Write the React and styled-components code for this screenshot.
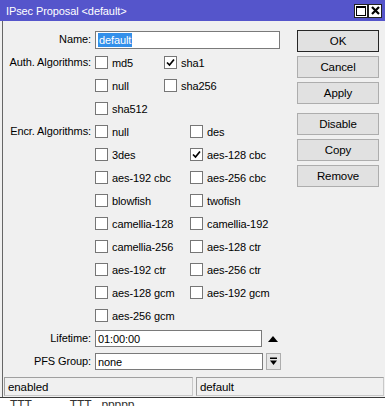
import React from 'react';
import styled, { createGlobalStyle } from 'styled-components';

const Global = createGlobalStyle`
  *, *::before, *::after { box-sizing: border-box; }
  html, body { margin: 0; padding: 0; background: #fff; }
  body {
    font-family: "Liberation Sans", Arial, sans-serif;
    font-size: 11px;
    letter-spacing: -0.1px;
    color: #000;
  }
`;

const Screen = styled.div`
  width: 385px;
  height: 406px;
  overflow: hidden;
  background: #fff;
`;

const Window = styled.div`
  width: 385px;
  background: #f0f0f0;
  border-bottom: 1px solid #3a3a3a;
`;

const TitleBar = styled.div`
  height: 21px;
  background: #5555cb;
  color: #fff;
  display: flex;
  align-items: center;
  padding: 0 3px 0 6px;
  font-size: 11px;
`;

const TitleText = styled.div`
  flex: 1;
`;

const TitleButtons = styled.div`
  display: flex;
`;

const TitleBtn = styled.div`
  width: 14px;
  height: 14px;
  background: #fff;
  border: 1px solid #222;
  display: flex;
  align-items: center;
  justify-content: center;
`;

const Body = styled.div`
  margin-left: 2px;
  border-left: 1px solid #666;
`;

const Main = styled.div`
  display: flex;
  padding-top: 7px;
`;

const Form = styled.div`
  flex: 0 0 294px;
  display: flex;
  flex-direction: column;
`;

const Row = styled.div`
  display: flex;
  align-items: flex-start;
`;

const Label = styled.div`
  flex: 0 0 92px;
  height: 23px;
  line-height: 23px;
  text-align: right;
  padding-right: 4px;
  white-space: nowrap;
`;

const Field = styled.div`
  height: 23px;
  display: flex;
  align-items: center;
`;

const TextInput = styled.div`
  width: ${p => p.$w}px;
  height: ${p => p.$h}px;
  background: #fff;
  border: 1px solid #7a7a7a;
  display: flex;
  align-items: center;
  padding-left: 2px;
  white-space: nowrap;
`;

const Selected = styled.span`
  background: #3390ea;
  color: #fff;
  padding: 0 1px;
  line-height: 14px;
`;

const CheckGrid = styled.div`
  display: grid;
  grid-template-columns: ${p => p.$col}px auto;
  grid-auto-rows: 23px;
`;

const CheckItem = styled.div`
  display: flex;
  align-items: center;
  gap: 4px;
  white-space: nowrap;
`;

const Box = styled.div`
  width: 13px;
  height: 13px;
  background: #fff;
  border: 1px solid #767676;
  display: flex;
  align-items: center;
  justify-content: center;
`;

const ButtonCol = styled.div`
  flex: 0 0 82px;
  display: flex;
  flex-direction: column;
  padding-top: 2px;
`;

const Btn = styled.div`
  height: 22px;
  margin-top: ${p => p.$gap}px;
  background: #e1e1e1;
  border: 1px solid ${p => (p.$default ? '#262626' : '#adadad')};
  display: flex;
  align-items: center;
  justify-content: center;
  font-size: 11.5px;
`;

const Triangle = styled.div`
  width: 0;
  height: 0;
  margin-left: 6px;
  border-left: 5px solid transparent;
  border-right: 5px solid transparent;
  border-bottom: 6px solid #000;
`;

const DropBtn = styled.div`
  width: 15px;
  height: 17px;
  margin-left: 3px;
  background: #e6e6e6;
  border: 1px solid #adadad;
  display: flex;
  align-items: center;
  justify-content: center;
`;

const StatusBar = styled.div`
  display: flex;
  gap: 3px;
  padding: 4px 2px 1px 1px;
`;

const StatusCell = styled.div`
  flex: 0 0 ${p => p.$w}px;
  height: 19px;
  border: 1px solid #c8c8c8;
  border-top-color: #a0a0a0;
  border-left-color: #a0a0a0;
  padding-left: 3px;
  display: flex;
  align-items: center;
  font-size: 11.5px;
`;

const Behind = styled.div`
  display: flex;
  padding-left: 10px;
  height: 8px;
  color: #333;
  font-size: 12px;
  line-height: 14px;
  overflow: hidden;
`;

const BehindText = styled.span`
  margin-right: ${p => p.$mr}px;
`;

function Check({ label, checked }) {
  return (
    <CheckItem>
      <Box>
        {checked && (
          <svg width="9" height="9" viewBox="0 0 9 9">
            <path d="M1 4.5 L3.5 7 L8 1.5" fill="none" stroke="#000" strokeWidth="1.7" />
          </svg>
        )}
      </Box>
      <span>{label}</span>
    </CheckItem>
  );
}

const auth = [
  ['md5', false], ['sha1', true],
  ['null', false], ['sha256', false],
  ['sha512', false],
];

const encr = [
  ['null', false], ['des', false],
  ['3des', false], ['aes-128 cbc', true],
  ['aes-192 cbc', false], ['aes-256 cbc', false],
  ['blowfish', false], ['twofish', false],
  ['camellia-128', false], ['camellia-192', false],
  ['camellia-256', false], ['aes-128 ctr', false],
  ['aes-192 ctr', false], ['aes-256 ctr', false],
  ['aes-128 gcm', false], ['aes-192 gcm', false],
  ['aes-256 gcm', false],
];

const buttons = [
  ['OK', 0, true], ['Cancel', 4], ['Apply', 4],
  ['Disable', 9], ['Copy', 4], ['Remove', 4],
];

export default function App() {
  return (
    <Screen>
      <Global />
      <Window>
        <TitleBar>
          <TitleText>IPsec Proposal &lt;default&gt;</TitleText>
          <TitleButtons>
            <TitleBtn>
              <svg width="10" height="10" viewBox="0 0 10 10">
                <rect x="0.5" y="0.5" width="9" height="9" fill="none" stroke="#000" />
                <rect x="0.5" y="0.5" width="9" height="1.5" fill="#000" />
              </svg>
            </TitleBtn>
            <TitleBtn>
              <svg width="9" height="9" viewBox="0 0 9 9">
                <path d="M1 1 L8 8 M8 1 L1 8" stroke="#000" strokeWidth="2.2" />
              </svg>
            </TitleBtn>
          </TitleButtons>
        </TitleBar>
        <Body>
          <Main>
            <Form>
              <Row>
                <Label>Name:</Label>
                <Field>
                  <TextInput $w={185} $h={18}>
                    <Selected>default</Selected>
                  </TextInput>
                </Field>
              </Row>
              <Row>
                <Label>Auth. Algorithms:</Label>
                <CheckGrid $col={69}>
                  {auth.map(([l, c], i) => <Check key={i} label={l} checked={c} />)}
                </CheckGrid>
              </Row>
              <Row>
                <Label>Encr. Algorithms:</Label>
                <CheckGrid $col={95}>
                  {encr.map(([l, c], i) => <Check key={i} label={l} checked={c} />)}
                </CheckGrid>
              </Row>
              <Row>
                <Label>Lifetime:</Label>
                <Field>
                  <TextInput $w={167} $h={17}>01:00:00</TextInput>
                  <Triangle />
                </Field>
              </Row>
              <Row>
                <Label>PFS Group:</Label>
                <Field>
                  <TextInput $w={168} $h={17}>none</TextInput>
                  <DropBtn>
                    <svg width="9" height="9" viewBox="0 0 9 9">
                      <rect x="1" y="0.5" width="7" height="1.5" fill="#000" />
                      <path d="M1 3.5 L8 3.5 L4.5 8 Z" fill="#000" />
                    </svg>
                  </DropBtn>
                </Field>
              </Row>
            </Form>
            <ButtonCol>
              {buttons.map(([l, g, d]) => (
                <Btn key={l} $gap={g} $default={d}>{l}</Btn>
              ))}
            </ButtonCol>
          </Main>
          <StatusBar>
            <StatusCell $w={189}>enabled</StatusCell>
            <StatusCell $w={188}>default</StatusCell>
          </StatusBar>
        </Body>
      </Window>
      <Behind>
        <BehindText $mr={38}>TTT</BehindText>
        <BehindText $mr={10}>TTT</BehindText>
        <BehindText $mr={0}>ppppp</BehindText>
      </Behind>
    </Screen>
  );
}
